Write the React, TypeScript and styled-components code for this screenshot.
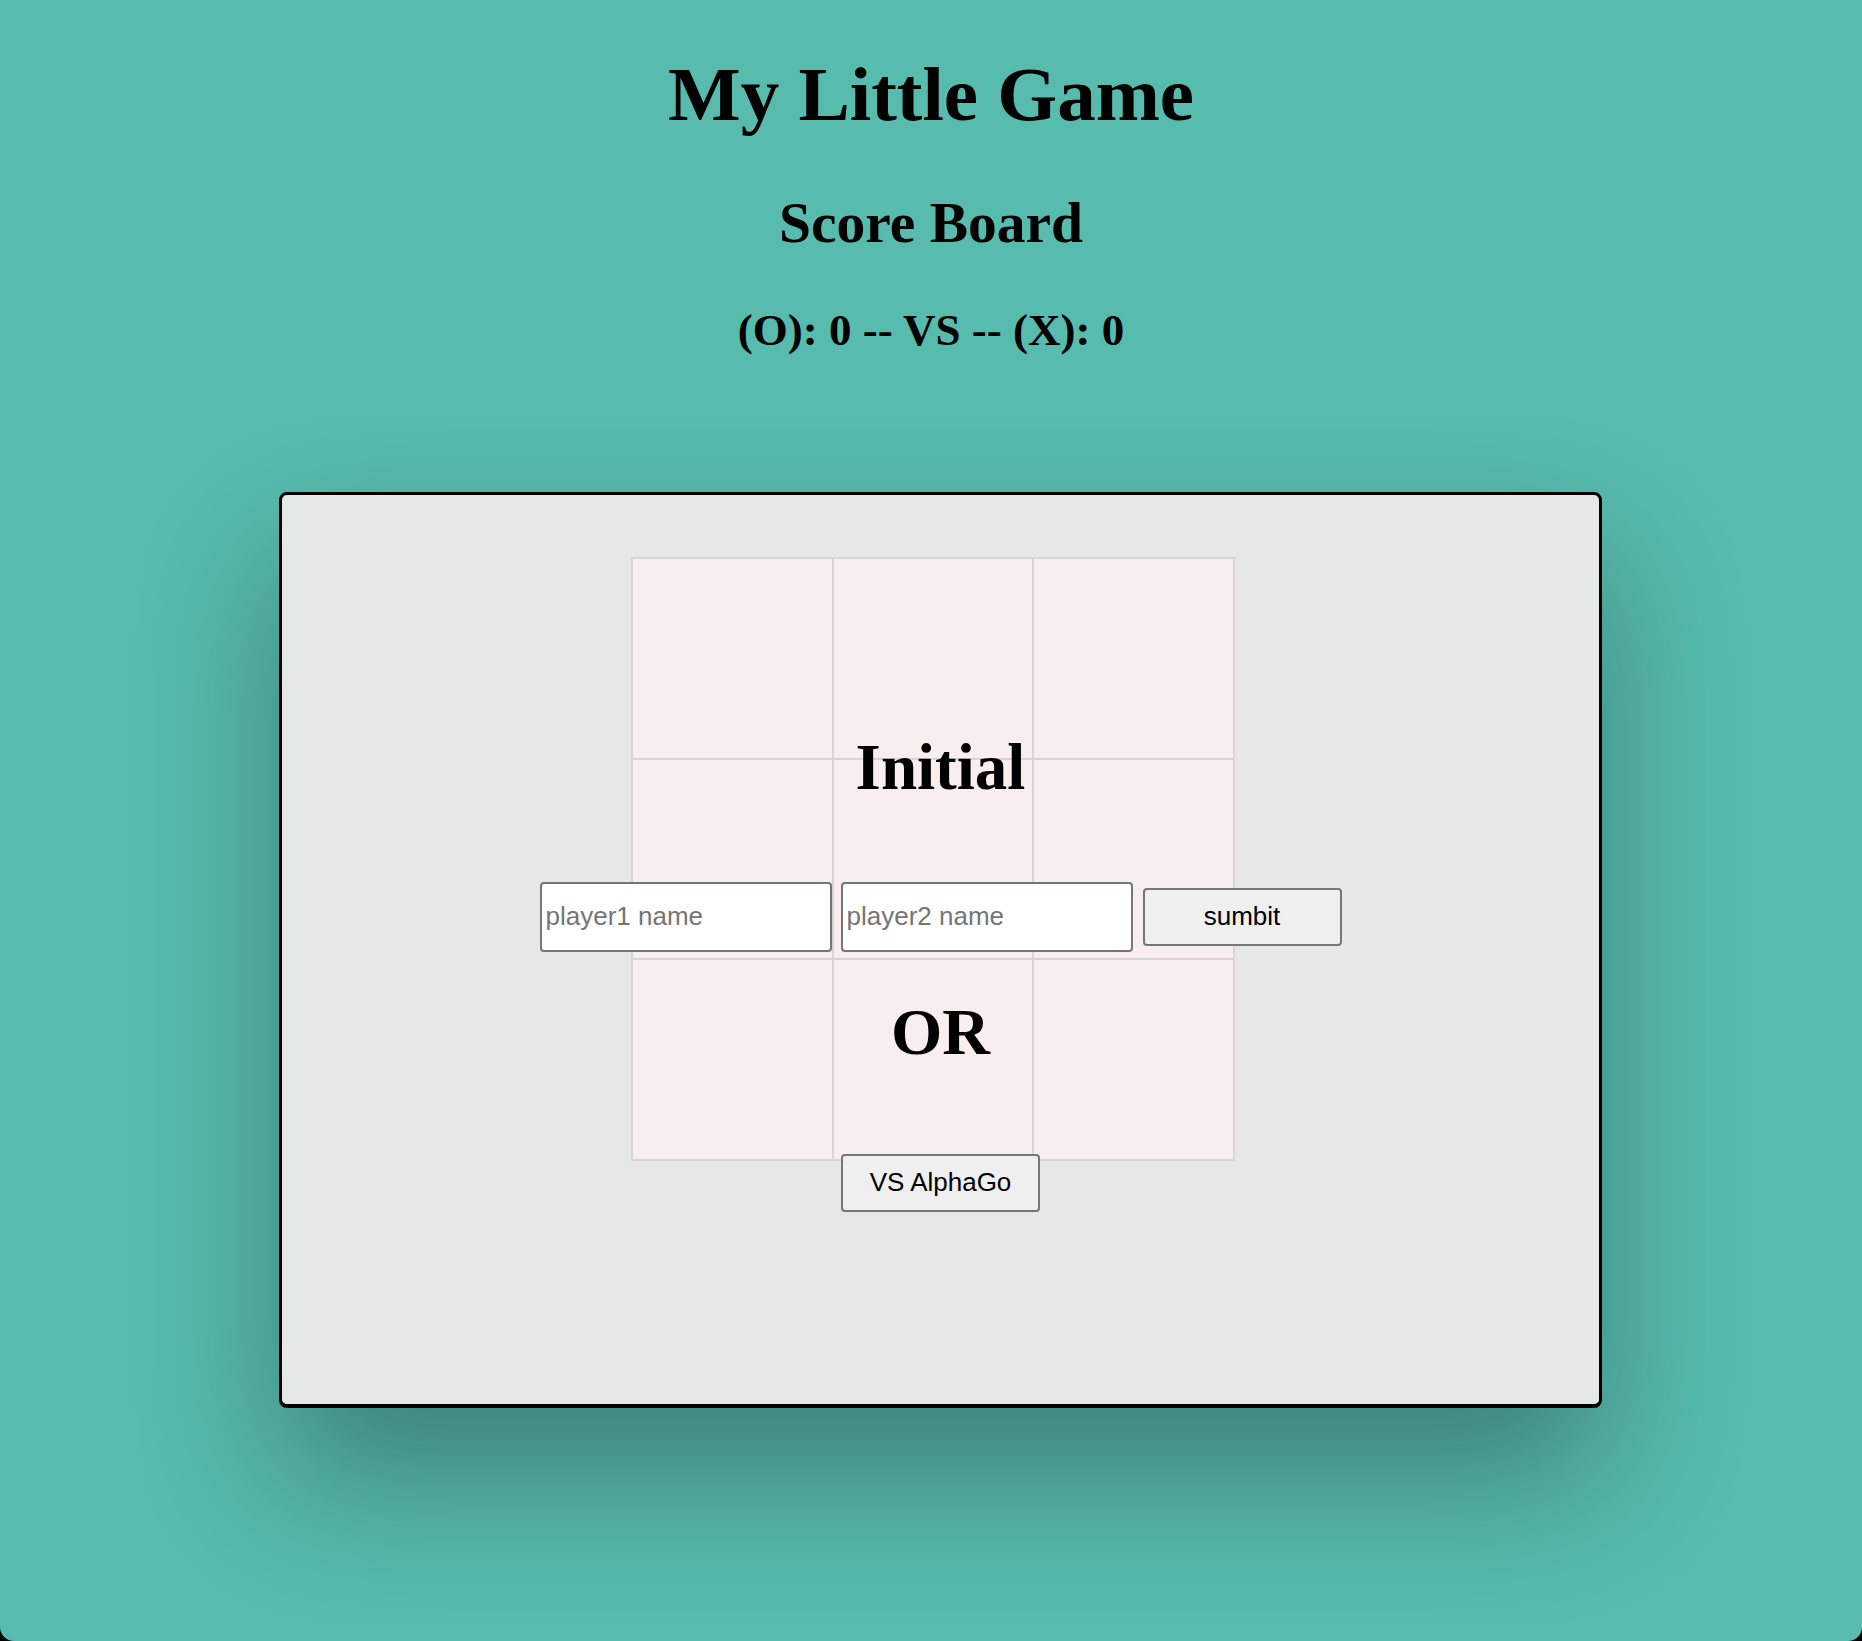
import React from "react";
import styled, { createGlobalStyle } from "styled-components";

const GlobalStyle = createGlobalStyle`
  html { background: #000; }
  body {
    margin: 0;
    font-family: "Liberation Serif", "Times New Roman", serif;
  }
`;

const Page = styled.div`
  box-sizing: border-box;
  width: 1862px;
  height: 1641px;
  background: #57bbad;
  border-radius: 0 0 14px 14px;
  padding-top: 56px;
  display: flex;
  flex-direction: column;
  align-items: center;
  overflow: hidden;
`;

const Title = styled.h1<{ $size: number; $gap: number }>`
  margin: ${(p) => p.$gap}px 0 0;
  font-family: "Liberation Serif", "Times New Roman", serif;
  font-weight: 700;
  font-size: ${(p) => p.$size}px;
  line-height: 1;
  color: #000;
  text-align: center;
`;

const Board = styled.section`
  position: relative;
  box-sizing: border-box;
  align-self: flex-start;
  margin: 139px 0 0 279px;
  width: 1323px;
  height: 916px;
  border: 3px solid #000;
  border-bottom-width: 4px;
  border-radius: 8px;
  background: #e6e8e5;
  box-shadow: 0 70px 140px rgba(0, 0, 0, 0.3);
  padding: 62px 0 0 349px;
`;

const Grid = styled.div`
  display: grid;
  grid-template-columns: 201px 200px 201px;
  grid-template-rows: 201px 200px 201px;
  width: max-content;
  border: 1px solid #dcd4d4;
`;

const Cell = styled.div`
  box-sizing: border-box;
  background: #f7eeed;
  border: 1px solid #dcd4d4;
`;

const Overlay = styled.div`
  position: absolute;
  left: 0;
  right: 0;
  top: 240px;
  display: flex;
  flex-direction: column;
  align-items: center;
`;

const BigWord = styled.div<{ $size: number; $gap: number }>`
  margin-top: ${(p) => p.$gap}px;
  font-family: "Liberation Serif", "Times New Roman", serif;
  font-weight: 700;
  font-size: ${(p) => p.$size}px;
  line-height: 1;
  color: #000;
`;

const FormRow = styled.div`
  margin-top: 82px;
  display: flex;
  align-items: center;
  gap: 9px;
  height: 70px;
`;

const NameInput = styled.input`
  box-sizing: border-box;
  width: 292px;
  height: 70px;
  border: 2px solid #767676;
  border-radius: 4px;
  background: #fff;
  padding: 0 4px;
  font-family: "Liberation Sans", Arial, sans-serif;
  font-size: 26px;
  color: #000;
  outline: none;
  &::placeholder {
    color: #757575;
  }
`;

const Button = styled.button<{ $gap?: number }>`
  box-sizing: border-box;
  width: 199px;
  height: 58px;
  margin-top: ${(p) => p.$gap ?? 0}px;
  margin-left: ${(p) => (p.$gap ? 0 : 1)}px;
  border: 2px solid #767676;
  border-radius: 4px;
  background: #efefef;
  font-family: "Liberation Sans", Arial, sans-serif;
  font-size: 26px;
  color: #000;
  padding: 0;
  cursor: pointer;
`;

export default function App() {
  const cells = Array.from({ length: 9 }, (_, i) => i);
  return (
    <>
      <GlobalStyle />
      <Page>
        <Title $size={77} $gap={0}>My Little Game</Title>
        <Title as="h2" $size={57.5} $gap={61}>Score Board</Title>
        <Title as="h3" $size={45} $gap={56}>(O): 0 -- VS -- (X): 0</Title>
        <Board>
          <Grid>
            {cells.map((c) => (
              <Cell key={c} />
            ))}
          </Grid>
          <Overlay>
            <BigWord $size={65} $gap={0}>Initial</BigWord>
            <FormRow>
              <NameInput placeholder="player1 name" />
              <NameInput placeholder="player2 name" />
              <Button>sumbit</Button>
            </FormRow>
            <BigWord $size={66} $gap={47}>OR</BigWord>
            <Button $gap={89}>VS AlphaGo</Button>
          </Overlay>
        </Board>
      </Page>
    </>
  );
}
